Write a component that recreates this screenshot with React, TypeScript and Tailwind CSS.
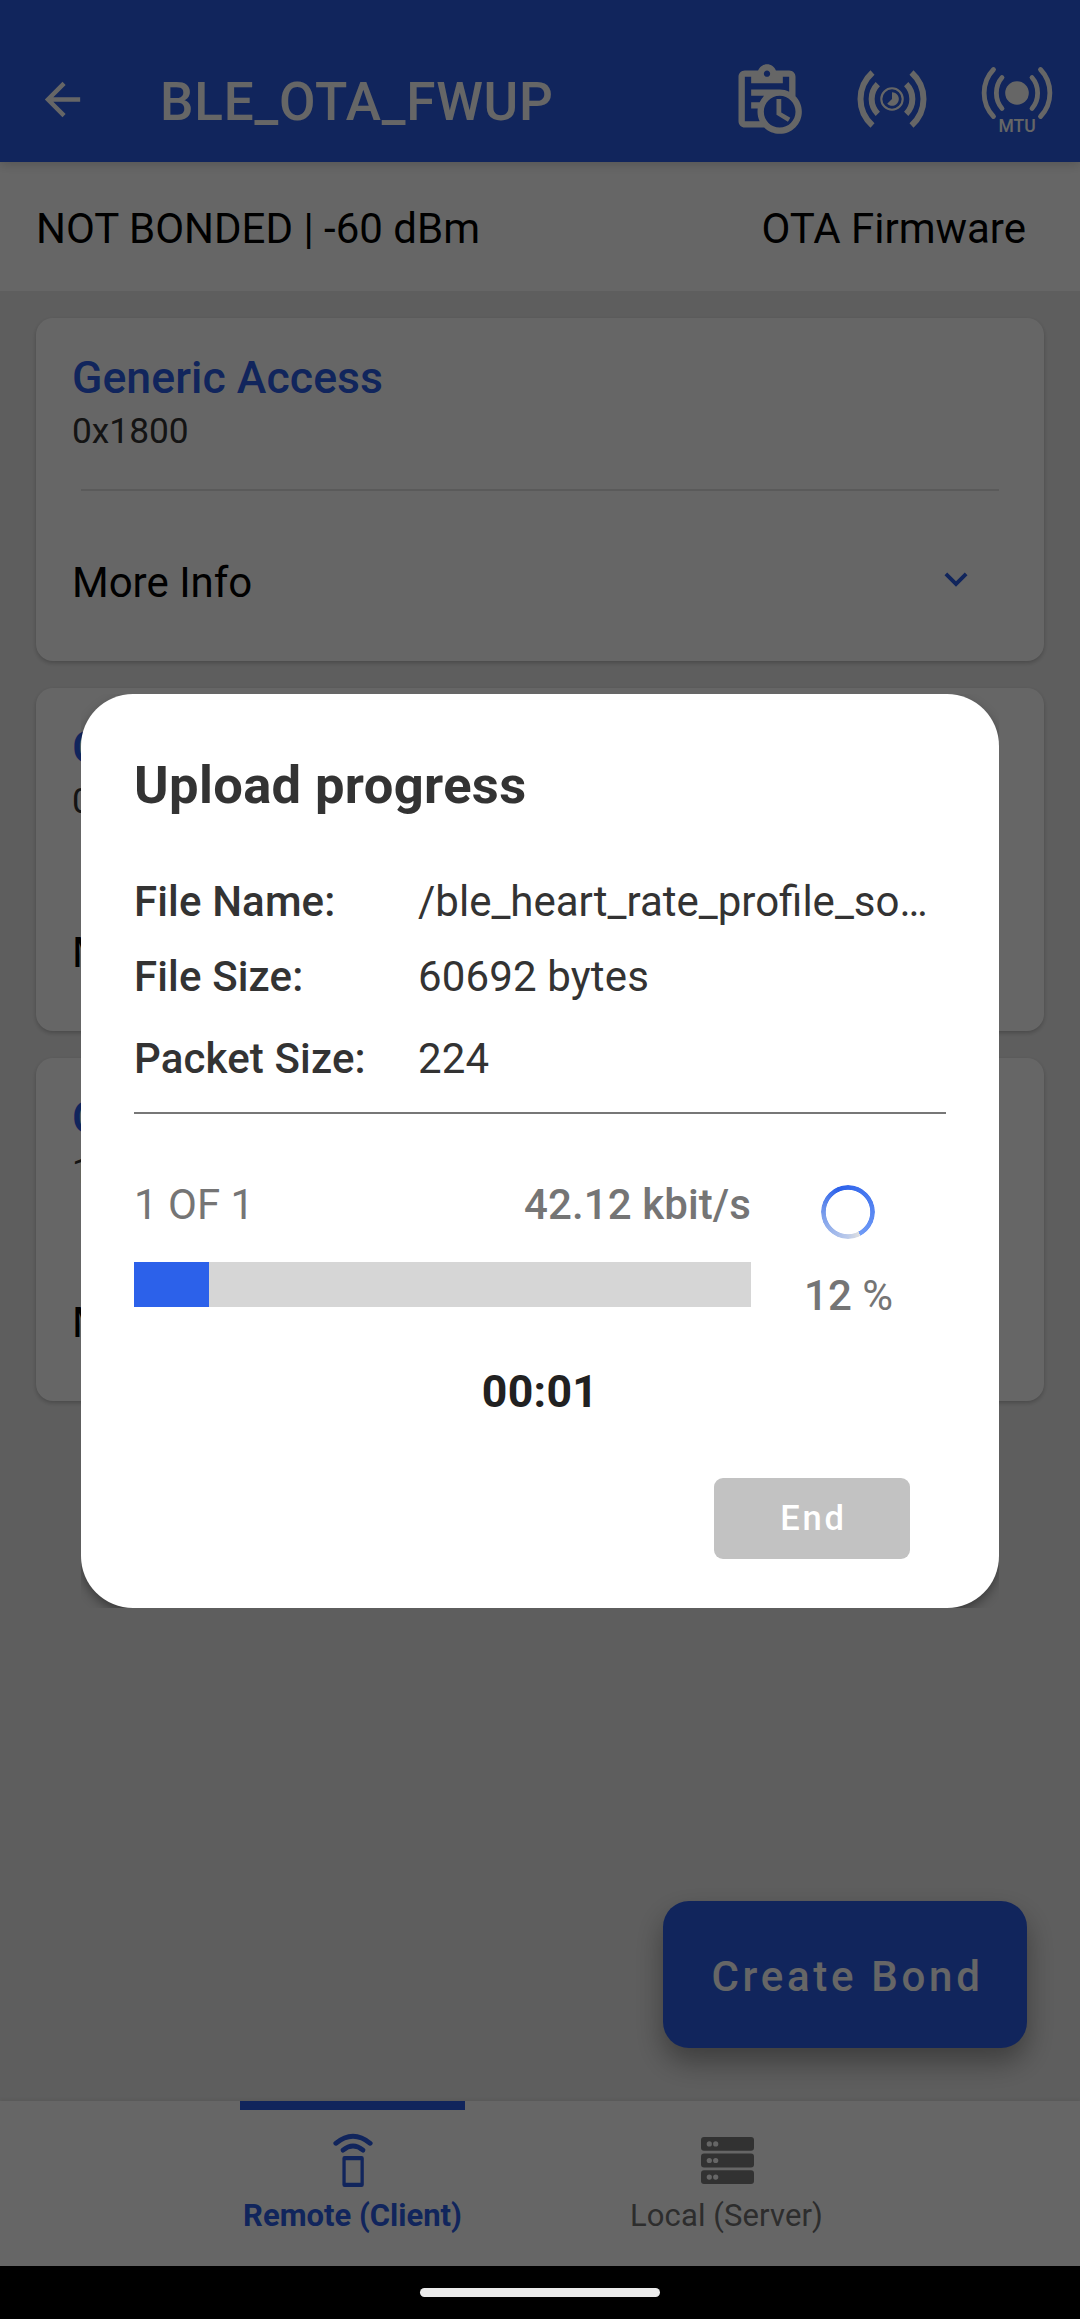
import React from "react";

const services = [
  { name: "Generic Access", uuid: "0x1800" },
  { name: "Generic Attribute", uuid: "0x1801" },
  { name: "OTA Service", uuid: "1D14D6EE-FD63-4FA1-BFA4-8F47B42119F0" },
];

function ScheduleIcon() {
  return (
    <svg viewBox="0 0 24 24" className="h-[76px] w-[76px]" fill="currentColor">
      <path d="M21 11.11V5C21 3.9 20.11 3 19 3H14.82C14.4 1.84 13.3 1 12 1S9.6 1.84 9.18 3H5C3.9 3 3 3.9 3 5V19C3 20.11 3.9 21 5 21H11.11C12.37 22.24 14.09 23 16 23C19.87 23 23 19.87 23 16C23 14.09 22.24 12.37 21 11.11M12 3C12.55 3 13 3.45 13 4S12.55 5 12 5 11 4.55 11 4 11.45 3 12 3M5 19V5H7V7H17V5H19V9.68C18.09 9.25 17.08 9 16 9H7V11H11.1C10.5 11.57 10.04 12.25 9.68 13H7V15H9.08C9.03 15.33 9 15.66 9 16C9 17.08 9.25 18.09 9.68 19H5M16 21C13.24 21 11 18.76 11 16C11 13.24 13.24 11 16 11C18.76 11 21 13.24 21 16C21 18.76 18.76 21 16 21M16.5 16.25L19.36 17.94L18.61 19.16L15 17V12H16.5V16.25Z" />
    </svg>
  );
}

function IntervalIcon() {
  return (
    <svg viewBox="-38 -38 76 76" className="h-[76px] w-[76px]" fill="none" stroke="currentColor">
      <g strokeWidth="6">
        <path d="M-19.5-26.5C-35.5-12-35.5 12-19.5 26.5" />
        <path d="M19.5-26.5C35.5-12 35.5 12 19.5 26.5" />
        <path d="M-14.2-14.8C-22.4-6.5-22.4 6.5-14.2 14.8" />
        <path d="M14.2-14.8C22.4-6.5 22.4 6.5 14.2 14.8" />
      </g>
      <circle r="10.7" strokeWidth="2.1" />
      <path d="M0-6.8A6.8 6.8 0 1 1-4.8 4.8L0 0Z" fill="currentColor" stroke="none" />
    </svg>
  );
}

function MtuIcon() {
  return (
    <div className="flex h-[76px] w-[76px] flex-col items-center">
      <svg viewBox="-38 -29 76 56" className="h-[56px] w-[76px] shrink-0" fill="none" stroke="currentColor" strokeLinecap="round">
        <circle r="11.8" fill="currentColor" stroke="none" />
        <g strokeWidth="4.8">
          <path d="M-23.5-23.5C-36-10.5-36 10.5-23.5 23.5" />
          <path d="M23.5-23.5C36-10.5 36 10.5 23.5 23.5" />
          <path d="M-15-15.5C-22.5-7-22.5 7-15 15.5" />
          <path d="M15-15.5C22.5-7 22.5 7 15 15.5" />
        </g>
      </svg>
      <span className="-mt-[4.5px] text-[17.5px] leading-[20px] font-medium">MTU</span>
    </div>
  );
}

function RemoteIcon() {
  return (
    <svg viewBox="0 0 44 56" className="h-[56px] w-[44px]" fill="none" stroke="currentColor" strokeLinecap="round">
      <path d="M4.8 10.3Q22-3.8 39.2 10.3" strokeWidth="4.8" />
      <path d="M12 17.2Q22 9 32 17.2" strokeWidth="4.8" />
      <path fillRule="evenodd" fill="currentColor" stroke="none" d="M13.6 23h17q2.2 0 2.2 2.2v26.6q0 2.2-2.2 2.2h-17q-2.2 0-2.2-2.2V25.2q0-2.2 2.2-2.2ZM14.7 27.3v22.4h14.8v-22.4Z" />
    </svg>
  );
}

function ServerIcon() {
  return (
    <svg viewBox="0 0 53 47" className="h-[47px] w-[53px]">
      {[0, 16.6, 33.2].map((y) => (
        <g key={y}>
          <rect y={y} width="53" height="13.8" rx="3" fill="#7d7d7d" />
          <circle cx="8.3" cy={y + 6.9} r="2.6" fill="#fff" />
          <circle cx="14.7" cy={y + 6.9} r="2.6" fill="#fff" />
        </g>
      ))}
    </svg>
  );
}

function ServiceCard({ name, uuid }: { name: string; uuid: string }) {
  return (
    <section className="flex h-[343px] flex-col rounded-[17px] bg-white pl-9 shadow-[0_2px_4px_rgba(0,0,0,0.22)]">
      <h2 className="mt-[34px] text-[44.6px] leading-[52px] font-medium tracking-[0.05px] text-[#2b5de7]">{name}</h2>
      <p className="mt-[5px] text-[35.3px] leading-[44px] whitespace-nowrap text-[#333]">{uuid}</p>
      <div className="mt-[36px] mr-[45px] ml-[9px] h-[2px] bg-[#e0e0e0]" />
      <div className="mt-[64px] flex items-start justify-between pr-[65px]">
        <span className="text-[42px] leading-[56px] text-black">More Info</span>
        <svg viewBox="0 0 24 24" className="mt-px h-[46px] w-[46px]" fill="#2b5de7">
          <path d="M7.41 8.59 12 13.17l4.59-4.58L18 10l-6 6-6-6z" />
        </svg>
      </div>
    </section>
  );
}

function InfoRow({ label, value, className }: { label: string; value: string; className: string }) {
  return (
    <div className={`flex text-[42px] leading-[50px] whitespace-nowrap text-[#333] ${className}`}>
      <span className="w-[284px] font-medium tracking-[0.14px]">{label}</span>
      <span>{value}</span>
    </div>
  );
}

function UploadDialog() {
  return (
    <div className="absolute top-[694px] left-[81px] h-[914px] w-[918px] overflow-hidden">
      <div className="flex h-full flex-col rounded-[52px] bg-white px-[53px] shadow-[0_5px_12px_-1px_rgba(0,0,0,0.42)]">
        <h1 className="mt-[61px] text-[52.5px] leading-[60px] font-bold tracking-[0.37px] text-[#333]">Upload progress</h1>
        <InfoRow label="File Name:" value="/ble_heart_rate_profile_so…" className="mt-[62px]" />
        <InfoRow label="File Size:" value="60692 bytes" className="mt-[25px] tracking-[0.15px]" />
        <InfoRow label="Packet Size:" value="224" className="mt-[32px] tracking-[0.15px]" />
        <div className="mt-[28px] h-[2px] shrink-0 bg-[#777]" />
        <div className="mt-[66px] flex text-[42px] leading-[50px] text-[#757575]">
          <div className="w-[617px]">
            <div className="flex justify-between">
              <span>1 OF 1</span>
              <span className="font-medium tracking-[0.1px]">42.12 kbit/s</span>
            </div>
            <div className="mt-[32px] h-[45px] bg-[#d6d6d6]">
              <div className="h-full w-[75px] bg-[#2c61ea]" />
            </div>
          </div>
          <div className="flex flex-1 flex-col items-center">
            <div className="mt-[5px] mr-[2px] h-[54px] w-[54px] rounded-full bg-[conic-gradient(from_152deg,#e0e0e0_0deg,#bccbea_28deg,#7c9fec_110deg,#2c61ea_185deg,#3468ec_208deg,#709bf6_360deg)] [mask:radial-gradient(circle,transparent_21.8px,#000_22.6px)]" />
            <div className="mt-[32px] whitespace-pre">
              <span className="font-medium">12</span> %
            </div>
          </div>
        </div>
        <div className="mt-[45px] text-center text-[44.6px] leading-[52px] font-bold tracking-[0.3px] text-[#212121]">00:01</div>
        <button className="mt-[60px] mr-[36px] h-[81px] w-[196px] shrink-0 self-end rounded-[9px] bg-[#c2c2c2] pl-[3px] text-center text-[34.5px] font-medium tracking-[2.8px] text-white">
          End
        </button>
      </div>
    </div>
  );
}

export default function App() {
  return (
    <div className="relative flex h-[2319px] w-[1080px] flex-col overflow-hidden bg-[#ebebeb] font-['Roboto',sans-serif]">
      <header className="relative z-10 flex h-[162px] shrink-0 items-start bg-[#2b5de7] text-white shadow-[0_3px_10px_rgba(0,0,0,0.16)]">
        <svg viewBox="0 0 24 24" className="mt-[73px] ml-[36px] h-[53px] w-[53px]" fill="currentColor">
          <path d="M20 11H7.83l5.59-5.59L12 4l-8 8 8 8 1.41-1.41L7.83 13H20v-2z" />
        </svg>
        <div className="mt-[72px] ml-[71px] flex-1 text-[53px] leading-[60px] font-medium tracking-[0.8px]">BLE_OTA_FWUP</div>
        <div className="mr-[25px] flex items-start">
          <div className="mt-[61px] mr-[49px]">
            <ScheduleIcon />
          </div>
          <div className="mt-[60.6px] mr-[49px]">
            <IntervalIcon />
          </div>
          <div className="mt-[64px]">
            <MtuIcon />
          </div>
        </div>
      </header>

      <div className="flex h-[129px] shrink-0 justify-between bg-white px-9 pt-[41px] pr-[54px] text-[42px] leading-[52px] text-black">
        <span>NOT BONDED | -60 dBm</span>
        <span>OTA Firmware</span>
      </div>

      <main className="relative flex flex-1 flex-col gap-[27px] px-9 pt-[27px]">
        {services.map((s) => (
          <ServiceCard key={s.uuid} {...s} />
        ))}
        <button className="absolute right-[53px] bottom-[53px] h-[147px] w-[364px] rounded-[26px] bg-[#2b5de7] pt-[4px] pl-[5px] text-[42px] font-medium tracking-[3.7px] text-white shadow-[0_14px_28px_rgba(0,0,0,0.35)]">
          Create Bond
        </button>
      </main>

      <nav className="relative flex h-[165px] shrink-0 bg-white pl-[240px] text-[31px] leading-[38px] shadow-[0_-2px_4px_rgba(0,0,0,0.06)]">
        <div className="flex w-[225px] flex-col items-center text-[#2b5de7]">
          <div className="h-[9px] w-full bg-[#2b5de7]" />
          <div className="mt-[23px]">
            <RemoteIcon />
          </div>
          <span className="mt-[8px] font-bold whitespace-nowrap">Remote (Client)</span>
        </div>
        <div className="ml-[148px] flex w-[228px] flex-col items-center pt-[36px] text-[#707070]">
          <ServerIcon />
          <span className="mt-[13px] -ml-px tracking-[0.1px] whitespace-nowrap">Local (Server)</span>
        </div>
      </nav>

      <footer className="flex h-[53px] shrink-0 justify-center bg-black pt-[22px]">
        <div className="relative z-30 h-[9px] w-[240px] rounded-full bg-[#ebebeb]" />
      </footer>

      <div className="absolute inset-0 z-20 bg-black/60" />
      <div className="absolute inset-0 z-20">
        <UploadDialog />
      </div>
    </div>
  );
}
